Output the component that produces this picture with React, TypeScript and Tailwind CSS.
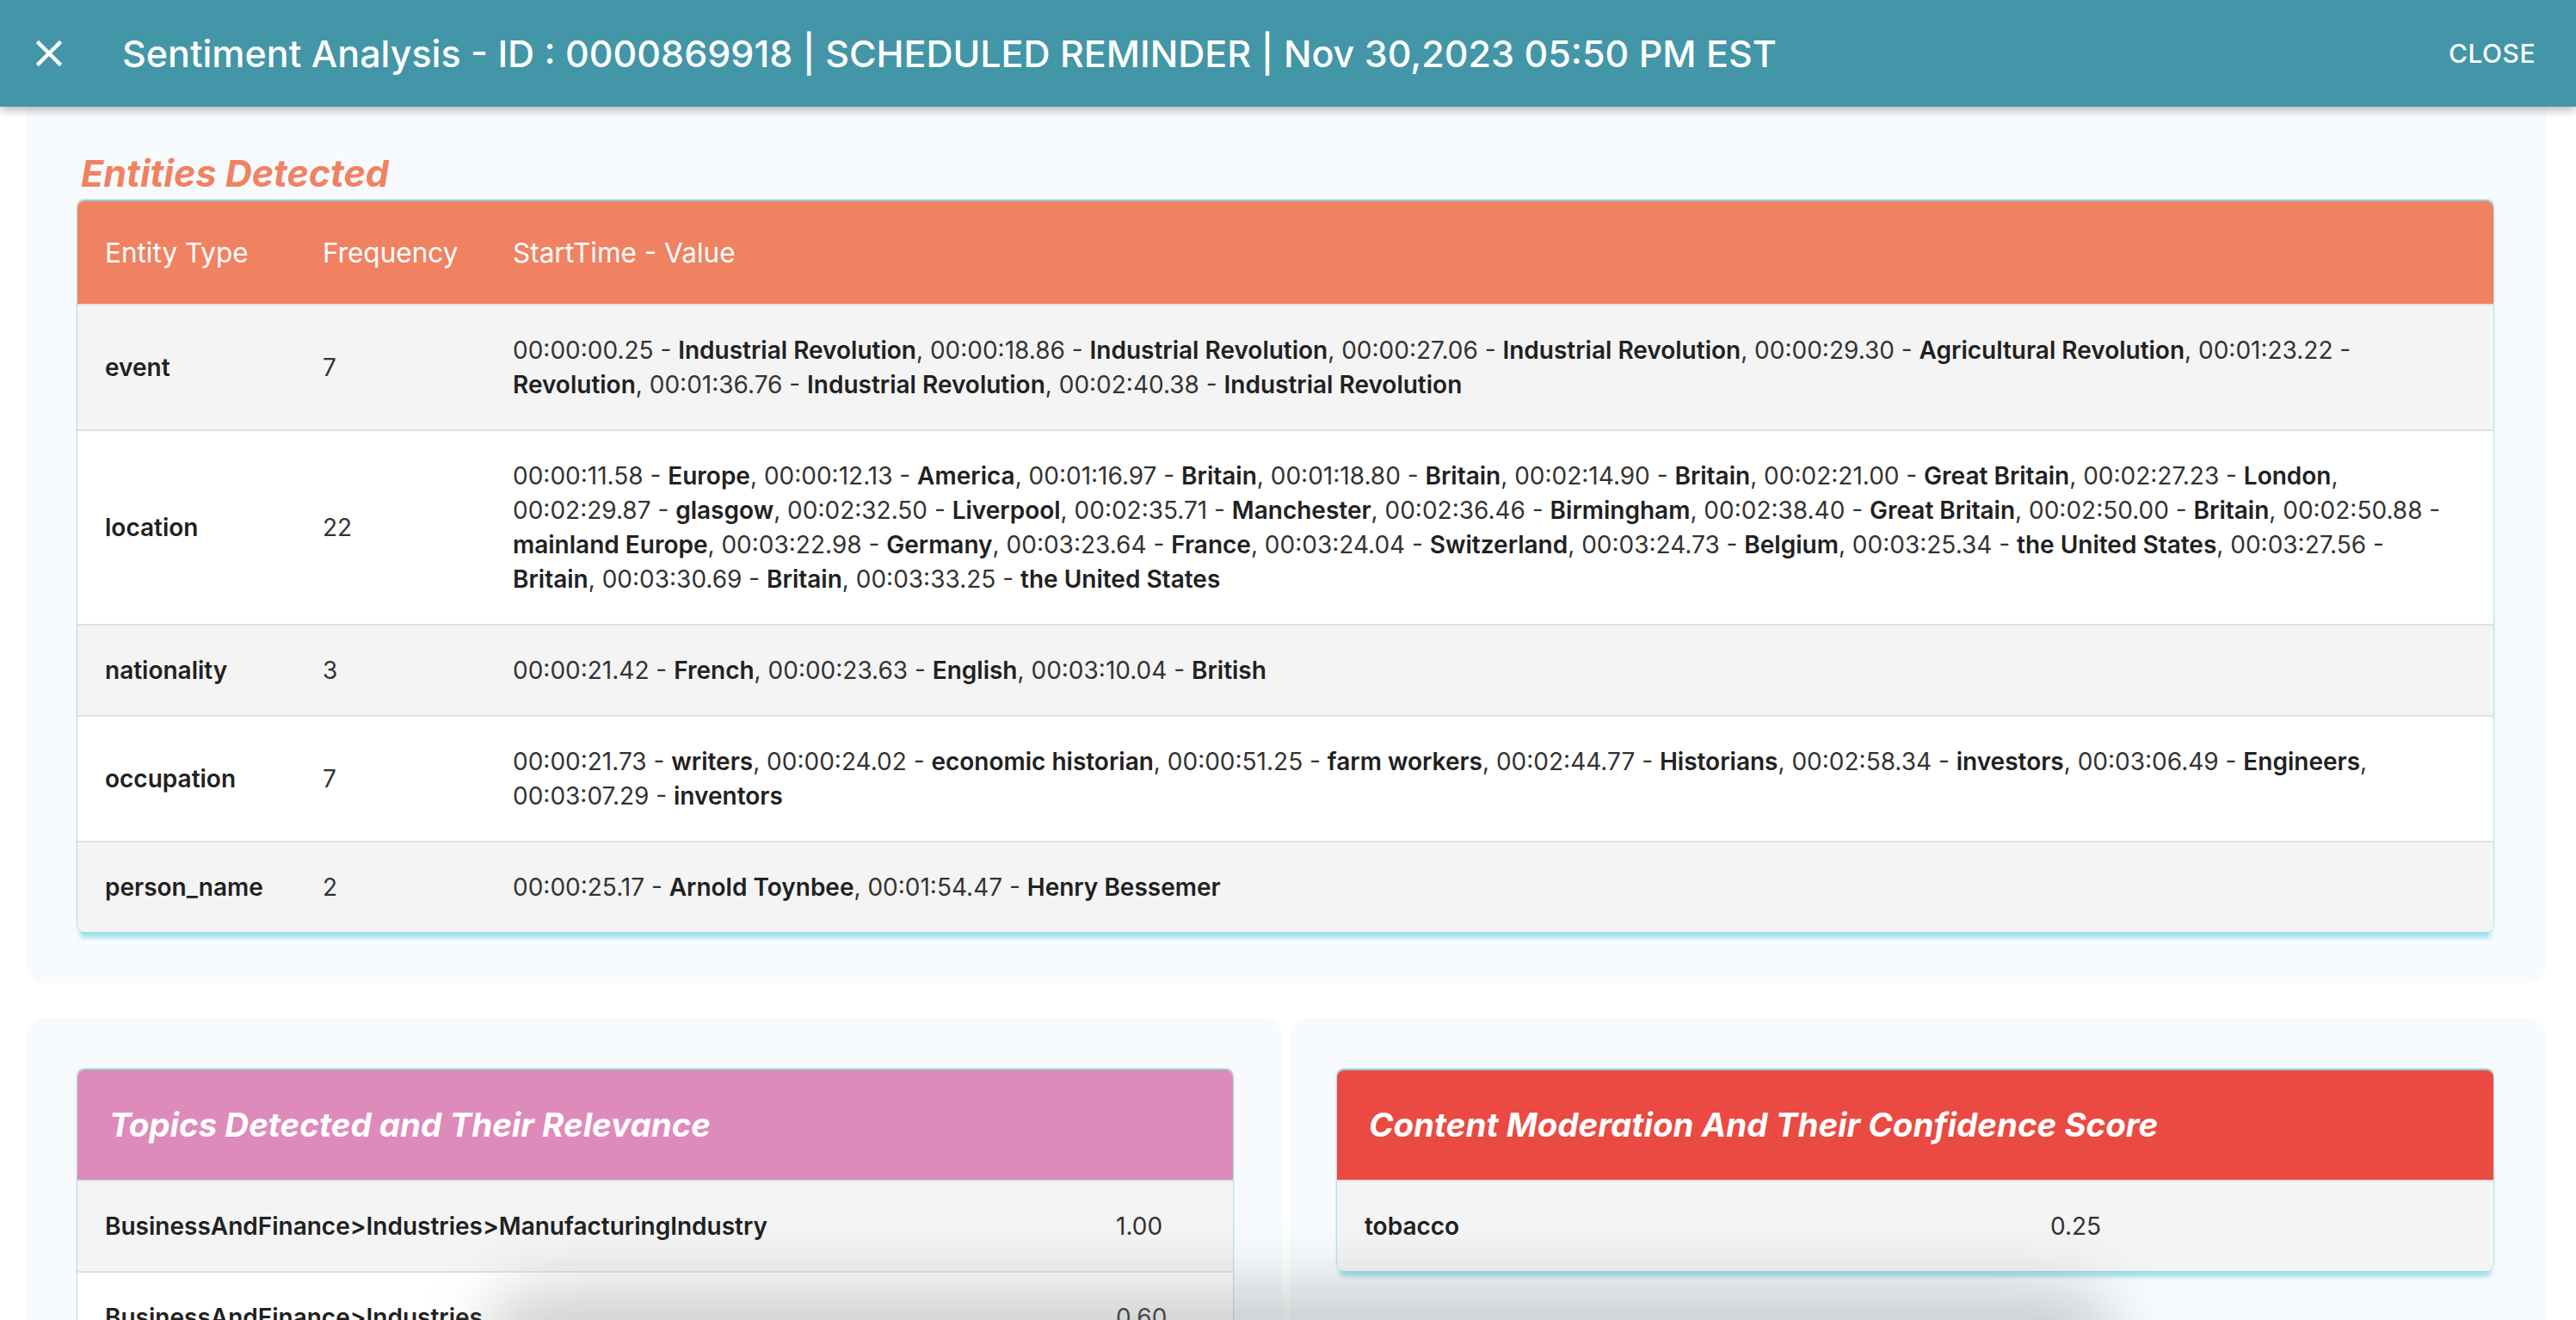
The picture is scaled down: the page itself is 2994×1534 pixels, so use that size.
import React from "react";

type Item = [string, string];

const entities: { type: string; freq: number; items: Item[] }[] = [
  {
    type: "event",
    freq: 7,
    items: [
      ["00:00:00.25", "Industrial Revolution"],
      ["00:00:18.86", "Industrial Revolution"],
      ["00:00:27.06", "Industrial Revolution"],
      ["00:00:29.30", "Agricultural Revolution"],
      ["00:01:23.22", "Revolution"],
      ["00:01:36.76", "Industrial Revolution"],
      ["00:02:40.38", "Industrial Revolution"],
    ],
  },
  {
    type: "location",
    freq: 22,
    items: [
      ["00:00:11.58", "Europe"],
      ["00:00:12.13", "America"],
      ["00:01:16.97", "Britain"],
      ["00:01:18.80", "Britain"],
      ["00:02:14.90", "Britain"],
      ["00:02:21.00", "Great Britain"],
      ["00:02:27.23", "London"],
      ["00:02:29.87", "glasgow"],
      ["00:02:32.50", "Liverpool"],
      ["00:02:35.71", "Manchester"],
      ["00:02:36.46", "Birmingham"],
      ["00:02:38.40", "Great Britain"],
      ["00:02:50.00", "Britain"],
      ["00:02:50.88", "mainland Europe"],
      ["00:03:22.98", "Germany"],
      ["00:03:23.64", "France"],
      ["00:03:24.04", "Switzerland"],
      ["00:03:24.73", "Belgium"],
      ["00:03:25.34", "the United States"],
      ["00:03:27.56", "Britain"],
      ["00:03:30.69", "Britain"],
      ["00:03:33.25", "the United States"],
    ],
  },
  {
    type: "nationality",
    freq: 3,
    items: [
      ["00:00:21.42", "French"],
      ["00:00:23.63", "English"],
      ["00:03:10.04", "British"],
    ],
  },
  {
    type: "occupation",
    freq: 7,
    items: [
      ["00:00:21.73", "writers"],
      ["00:00:24.02", "economic historian"],
      ["00:00:51.25", "farm workers"],
      ["00:02:44.77", "Historians"],
      ["00:02:58.34", "investors"],
      ["00:03:06.49", "Engineers"],
      ["00:03:07.29", "inventors"],
    ],
  },
  {
    type: "person_name",
    freq: 2,
    items: [
      ["00:00:25.17", "Arnold Toynbee"],
      ["00:01:54.47", "Henry Bessemer"],
    ],
  },
];

const topics: [string, string][] = [
  ["BusinessAndFinance>Industries>ManufacturingIndustry", "1.00"],
  ["BusinessAndFinance>Industries", "0.60"],
  ["BusinessAndFinance>Economy", "0.45"],
];

const tableShadow =
  "shadow-[0_-2px_2px_rgba(80,140,150,0.55),0_0_3px_rgba(140,215,230,0.8),0_10px_5px_-3px_rgba(160,222,234,0.95)]";

export default function App() {
  return (
    <div
      className="relative h-[1534px] w-full overflow-hidden bg-white text-[#212121]"
      style={{ fontFamily: "Inter, 'Noto Sans', sans-serif" }}
    >
      {/* Top bar */}
      <header className="relative z-10 flex h-[124px] items-center bg-[#4396a7] pl-[31px] pr-[47px] text-white shadow-[0_4px_10px_rgba(0,0,0,0.28)]">
        <svg viewBox="0 0 24 24" className="h-[52px] w-[52px]" fill="currentColor">
          <path d="M19 6.41 17.59 5 12 10.59 6.41 5 5 6.41 10.59 12 5 17.59 6.41 19 12 13.41 17.59 19 19 17.59 13.41 12z" />
        </svg>
        <h1 className="ml-[59px] flex-1 text-[43px] font-medium leading-[50px]">
          Sentiment Analysis - ID : 0000869918 | SCHEDULED REMINDER | Nov 30,2023 05:50 PM EST
        </h1>
        <button className="text-[30px] font-medium uppercase leading-[36px] tracking-[0.5px]">Close</button>
      </header>

      <main className="pl-[31px] pr-[35px]">
        {/* Entities card */}
        <section className="rounded-b-[22px] bg-[#f7fbfd] pb-[60px] pl-[59px] pr-[61px] pt-[50px]">
          <h2 className="mb-[6px] ml-[4px] text-[43px] font-bold italic leading-[54px] text-[#f08262]">
            Entities Detected
          </h2>
          <div className={`overflow-hidden rounded-[8px] bg-white ${tableShadow}`}>
            <table className="w-full table-fixed border-collapse text-left">
              <colgroup>
                <col className="w-[253px]" />
                <col className="w-[221px]" />
                <col />
              </colgroup>
              <thead>
                <tr className="h-[120px] bg-[#f08262] text-white">
                  <th className="px-[32px] text-[31.5px] font-normal">Entity Type</th>
                  <th className="px-[32px] text-[31.5px] font-normal">Frequency</th>
                  <th className="px-[32px] text-[31.5px] font-normal">StartTime - Value</th>
                </tr>
              </thead>
              <tbody className="text-[28px] leading-[40px]">
                {entities.map((e, i) => (
                  <tr
                    key={e.type}
                    className={`border-t-2 border-[#e0e0e0] ${i % 2 === 0 ? "bg-[#f4f4f4]" : "bg-white"}`}
                  >
                    <td className="px-[32px] py-[32px] font-semibold">{e.type}</td>
                    <td className="px-[32px] py-[32px] text-[#333]">{e.freq}</td>
                    <td className="px-[32px] py-[32px] text-[#333]">
                      {e.items.map(([t, v], k) => (
                        <React.Fragment key={k}>
                          {t} - <span className="font-semibold text-[#212121]">{v}</span>
                          {k < e.items.length - 1 ? ", " : ""}
                        </React.Fragment>
                      ))}
                    </td>
                  </tr>
                ))}
              </tbody>
            </table>
          </div>
        </section>

        {/* Lower cards */}
        <div className="mt-[40px] grid grid-cols-2 gap-[8px]">
          <section className="rounded-[22px] bg-[#f7fbfd] pb-[60px] pl-[59px] pr-[58px] pt-[61px]">
            <div className={`overflow-hidden rounded-[8px] bg-white ${tableShadow}`}>
              <div className="flex h-[127px] items-center bg-[#dd8bbb] px-[37px] text-[38.5px] font-bold italic text-white">
                Topics Detected and Their Relevance
              </div>
              {topics.map(([name, score], i) => (
                <div
                  key={name}
                  className={`flex h-[106px] items-center border-t-2 border-[#e0e0e0] text-[28px] leading-[40px] ${
                    i % 2 === 0 ? "bg-[#f4f4f4]" : "bg-white"
                  }`}
                >
                  <div className="flex-1 px-[32px] font-semibold">{name}</div>
                  <div className="w-[168px] px-[32px] text-[#333]">{score}</div>
                </div>
              ))}
            </div>
          </section>

          <section className="rounded-[22px] bg-[#f7fbfd] pb-[60px] pl-[55px] pr-[61px] pt-[61px]">
            <div className={`overflow-hidden rounded-[8px] bg-white ${tableShadow}`}>
              <div className="flex h-[127px] items-center bg-[#ea4a42] px-[37px] text-[38.5px] font-bold italic text-white">
                Content Moderation And Their Confidence Score
              </div>
              <div className="flex h-[106px] items-center border-t-2 border-[#e0e0e0] bg-[#f4f4f4] text-[28px] leading-[40px]">
                <div className="w-[797px] px-[32px] font-semibold">tobacco</div>
                <div className="flex-1 px-[32px] text-[#333]">0.25</div>
              </div>
            </div>
          </section>
        </div>
      </main>

      {/* floating element shadow peeking from below the viewport */}
      <div className="pointer-events-none absolute bottom-[-70px] left-[600px] h-[70px] w-[1820px] rounded-full bg-[#d9dcdf] shadow-[0_0_70px_40px_rgba(120,125,130,0.35)]" />
    </div>
  );
}
